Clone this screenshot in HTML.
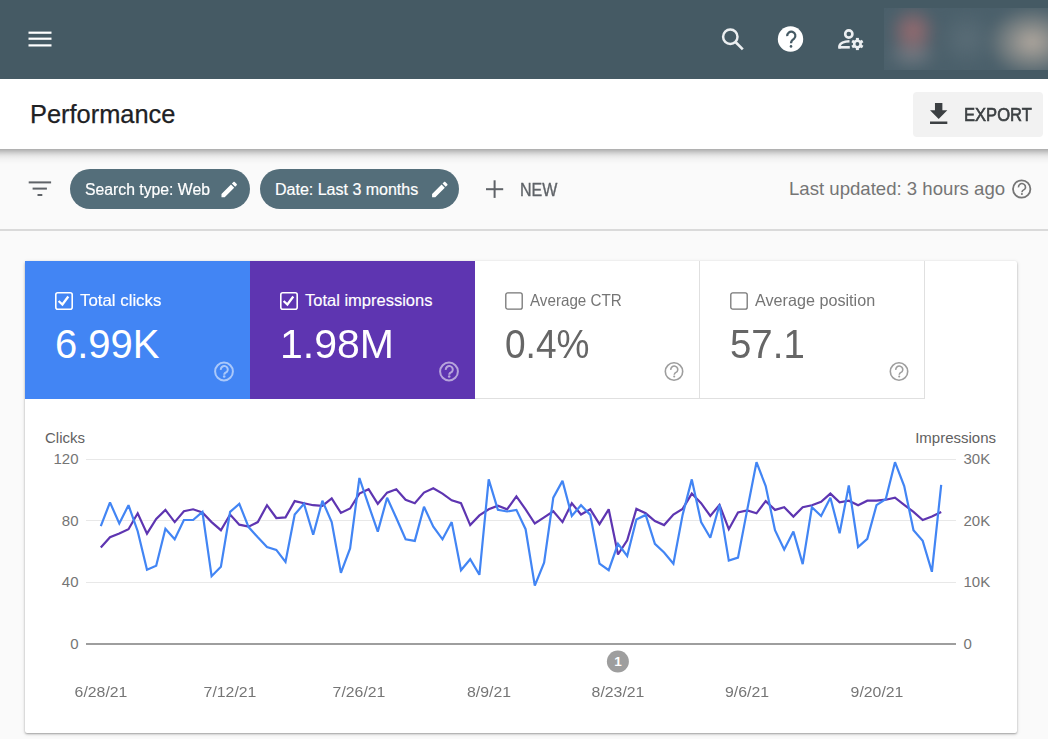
<!DOCTYPE html>
<html><head><meta charset="utf-8">
<style>
*{margin:0;padding:0;box-sizing:border-box}
html,body{width:1048px;height:739px;overflow:hidden;background:#fafafa;font-family:"Liberation Sans",sans-serif;position:relative}
.abs{position:absolute}
#hdr{left:0;top:0;width:1048px;height:79px;background:#455a64}
#titlebar{left:0;top:79px;width:1048px;height:70px;background:#fff;z-index:2}
#tshadow{left:0;top:149px;width:1048px;height:16px;z-index:2;background:linear-gradient(to bottom, rgba(0,0,0,.31) 0, rgba(0,0,0,.24) 2px, rgba(0,0,0,.16) 4px, rgba(0,0,0,.075) 7px, rgba(0,0,0,.03) 10px, rgba(0,0,0,.01) 13px, rgba(0,0,0,0) 16px)}
#title{left:30px;top:100px;font-size:25.4px;color:#202124;z-index:3;-webkit-text-stroke:0.25px #202124;white-space:nowrap}
#export{left:913px;top:92px;width:130px;height:45px;background:#f2f2f2;border-radius:4px;z-index:3}
#exporttxt{z-index:4;left:964px;top:105px;font-size:18px;color:#3c4043;-webkit-text-stroke:0.6px #3c4043;transform-origin:0 0;transform:scaleX(0.92)}
#filterbar{left:0;top:149px;width:1048px;height:82px;background:#fafafa;border-bottom:2px solid #dadada}
.chip{height:40px;top:169px;background:#546e7a;border-radius:20px}
.chiptxt{top:180.7px;font-size:16px;transform-origin:0 0;transform:scaleX(0.985);color:#fff;white-space:nowrap;-webkit-text-stroke:0.2px #fff}
#newtxt{left:520px;top:180px;font-size:18px;color:#5f6368;-webkit-text-stroke:0.35px #5f6368;transform-origin:0 0;transform:scaleX(0.89)}
#updated{left:789px;top:178px;font-size:18.6px;color:#757575;white-space:nowrap}
#card{left:25px;top:261px;width:992px;height:472px;background:#fff;border-radius:2px;box-shadow:0 1px 2px rgba(0,0,0,.3),0 1px 4px rgba(0,0,0,.12)}
.tile{top:261px;width:225px;height:138px}
.tlabel{top:290.5px;font-size:16.5px;white-space:nowrap;-webkit-text-stroke:0.15px currentColor}
.tval{top:322px;font-size:40px;white-space:nowrap}
.axl{font-size:15px;color:#616161;white-space:nowrap}
</style></head><body>
<div id="hdr" class="abs"></div>
<!-- hamburger -->
<svg class="abs" style="left:0;top:0" width="1048" height="79">
  <rect x="28.5" y="31.6" width="23" height="2.2" fill="#fff"/>
  <rect x="28.5" y="37.6" width="23" height="2.2" fill="#fff"/>
  <rect x="28.5" y="44.3" width="23" height="2.2" fill="#fff"/>
  <!-- search -->
  <circle cx="730.3" cy="36.8" r="7.2" fill="none" stroke="#eceff1" stroke-width="2.5"/>
  <line x1="735.5" y1="42" x2="742.8" y2="49.3" stroke="#eceff1" stroke-width="2.6"/>
  <!-- help -->
  <circle cx="790.5" cy="39" r="12.7" fill="#fff"/>
  <path d="M787.2 36.2 A4.1 4.1 0 1 1 794.2 38.6 Q791 40.6 791 43.3" fill="none" stroke="#455a64" stroke-width="2.2"/><circle cx="791" cy="46.4" r="1.3" fill="#455a64"/>
  <!-- person gear -->
  <circle cx="848.8" cy="34" r="3.6" fill="none" stroke="#eceff1" stroke-width="2.6"/>
  <path d="M839.6 48.5 L839.6 45.5 Q841 41.6 849.5 41.2" fill="none" stroke="#eceff1" stroke-width="2.6"/>
  <line x1="838.4" y1="47.3" x2="849.8" y2="47.3" stroke="#eceff1" stroke-width="2.6"/>
  <g transform="translate(857.4 44)">
    <circle r="4.5" fill="#eceff1"/>
    <g fill="#eceff1">
      <rect x="-1.5" y="-6.1" width="3" height="12.2"/>
      <rect x="-1.5" y="-6.1" width="3" height="12.2" transform="rotate(60)"/>
      <rect x="-1.5" y="-6.1" width="3" height="12.2" transform="rotate(120)"/>
    </g>
    <circle r="1.9" fill="#455a64"/>
  </g>
</svg>
<!-- blurred avatars -->
<div class="abs" style="left:884px;top:8px;width:164px;height:62px;overflow:hidden;background:#4b606b">
  <div class="abs" style="left:-20px;top:-20px;width:210px;height:110px;filter:blur(6px);
    background:
      radial-gradient(ellipse 25px 26px at 49px 43px, rgba(160,108,112,0.95), rgba(160,108,112,0) 100%),
      radial-gradient(ellipse 28px 18px at 48px 66px, rgba(120,126,134,0.85), rgba(120,126,134,0) 100%),
      radial-gradient(ellipse 30px 30px at 103px 51px, rgba(92,110,120,0.9), rgba(92,110,120,0) 100%),
      radial-gradient(ellipse 46px 36px at 168px 54px, rgba(180,170,160,1), rgba(180,170,160,0) 100%);"></div>
</div>
<div id="titlebar" class="abs"></div><div id="tshadow" class="abs"></div>
<div id="title" class="abs">Performance</div>
<div id="export" class="abs"></div>
<svg class="abs" style="left:900px;top:90px;z-index:4" width="60" height="40">
  <path fill="#3c4043" transform="translate(23.85 9.2) scale(1.235)" d="M19 9h-4V3H9v6H5l7 7 7-7zM5 18v2h14v-2H5z"/>
</svg>
<div id="exporttxt" class="abs">EXPORT</div>

<div id="filterbar" class="abs"></div>
<svg class="abs" style="left:0;top:149px" width="80" height="80">
  <rect x="28.7" y="32.4" width="22.4" height="2" fill="#5f6368"/>
  <rect x="32.6" y="38.6" width="14.3" height="2" fill="#5f6368"/>
  <rect x="37.5" y="45" width="4.8" height="2" fill="#5f6368"/>
</svg>
<div class="abs chip" style="left:70px;width:180px"></div>
<div class="abs chiptxt" style="left:85px">Search type: Web</div>
<div class="abs chip" style="left:260px;width:199px"></div>
<div class="abs chiptxt" style="left:275px;transform:scaleX(1.0)">Date: Last 3 months</div>
<svg class="abs" style="left:0;top:170px" width="470" height="40">
  <path id="pencil" fill="#fff" transform="translate(218.9 9.2) scale(0.86)" d="M3 17.25V21h3.75L17.81 9.94l-3.75-3.75L3 17.25zM20.71 7.04c.39-.39.39-1.02 0-1.41l-2.34-2.34c-.39-.39-1.02-.39-1.41 0l-1.83 1.83 3.75 3.75 1.83-1.83z"/>
  <use href="#pencil" x="210.6"/>
</svg>
<svg class="abs" style="left:0;top:0" width="520" height="220">
  <rect x="486" y="188.2" width="17.2" height="2" fill="#5f6368"/>
  <rect x="493.6" y="180.3" width="2" height="17.6" fill="#5f6368"/>
</svg>
<div id="newtxt" class="abs">NEW</div>
<div id="updated" class="abs">Last updated: 3 hours ago</div>
<svg class="abs" style="left:1010px;top:178px" width="24" height="24">
  <circle cx="11.7" cy="11" r="8.7" fill="none" stroke="#757575" stroke-width="1.8"/>
  <path d="M8.5 9.4 A3.5 3.5 0 1 1 14.8 11.1 Q11.9 12.5 11.9 14.3" fill="none" stroke="#757575" stroke-width="1.6"/><circle cx="11.9" cy="16" r="1.05" fill="#757575"/>
</svg>

<div id="card" class="abs"></div>
<div class="abs tile" style="left:25px;background:#4285f4"></div>
<div class="abs tile" style="left:250px;background:#5e35b1"></div>
<div class="abs tile" style="left:475px;border-right:1px solid #e0e0e0;border-bottom:1px solid #e0e0e0"></div>
<div class="abs tile" style="left:700px;border-right:1px solid #e0e0e0;border-bottom:1px solid #e0e0e0"></div>

<svg class="abs" style="left:54px;top:291px" width="20" height="20"><rect x="1.8" y="1.8" width="16.4" height="16.4" rx="2" fill="none" stroke="#fff" stroke-width="1.6"/><path d="M4.6 10 L8.4 13.5 L14.3 5.5" fill="none" stroke="#fff" stroke-width="2.3"/></svg>
<div class="abs tlabel" style="left:80px;color:#fff;transform-origin:0 0;transform:scaleX(1.02)">Total clicks</div>
<div class="abs tval" style="left:55px;color:#fff;transform-origin:0 0;transform:scaleX(1.0)">6.99K</div>
<svg class="abs" style="left:214px;top:361px;opacity:0.55" width="22" height="22"><circle cx="10" cy="10.5" r="8.9" fill="none" stroke="#fff" stroke-width="2.0"/><path d="M6.8 8.9 A3.5 3.5 0 1 1 13.1 10.6 Q10.2 12 10.2 13.8" fill="none" stroke="#fff" stroke-width="2.0"/><circle cx="10.2" cy="15.5" r="1.30" fill="#fff"/></svg>
<svg class="abs" style="left:279px;top:291px" width="20" height="20"><rect x="1.8" y="1.8" width="16.4" height="16.4" rx="2" fill="none" stroke="#fff" stroke-width="1.6"/><path d="M4.6 10 L8.4 13.5 L14.3 5.5" fill="none" stroke="#fff" stroke-width="2.3"/></svg>
<div class="abs tlabel" style="left:305px;color:#fff;transform-origin:0 0;transform:scaleX(1.0)">Total impressions</div>
<div class="abs tval" style="left:280px;color:#fff;transform-origin:0 0;transform:scaleX(1.025)">1.98M</div>
<svg class="abs" style="left:439px;top:361px;opacity:0.55" width="22" height="22"><circle cx="10" cy="10.5" r="8.9" fill="none" stroke="#fff" stroke-width="2.0"/><path d="M6.8 8.9 A3.5 3.5 0 1 1 13.1 10.6 Q10.2 12 10.2 13.8" fill="none" stroke="#fff" stroke-width="2.0"/><circle cx="10.2" cy="15.5" r="1.30" fill="#fff"/></svg>
<svg class="abs" style="left:504px;top:291px" width="20" height="20"><rect x="1.8" y="1.8" width="16.4" height="16.4" rx="2" fill="none" stroke="#757575" stroke-width="1.3"/></svg>
<div class="abs tlabel" style="left:530px;color:#757575;-webkit-text-stroke:0;transform-origin:0 0;transform:scaleX(0.92)">Average CTR</div>
<div class="abs tval" style="left:505px;color:#666666;transform-origin:0 0;transform:scaleX(0.926)">0.4%</div>
<svg class="abs" style="left:664px;top:361px;opacity:1" width="22" height="22"><circle cx="10" cy="10.5" r="8.7" fill="none" stroke="#9e9e9e" stroke-width="1.6"/><path d="M6.8 8.9 A3.5 3.5 0 1 1 13.1 10.6 Q10.2 12 10.2 13.8" fill="none" stroke="#9e9e9e" stroke-width="1.6"/><circle cx="10.2" cy="15.5" r="1.04" fill="#9e9e9e"/></svg>
<svg class="abs" style="left:729px;top:291px" width="20" height="20"><rect x="1.8" y="1.8" width="16.4" height="16.4" rx="2" fill="none" stroke="#757575" stroke-width="1.3"/></svg>
<div class="abs tlabel" style="left:755px;color:#757575;-webkit-text-stroke:0;transform-origin:0 0;transform:scaleX(0.98)">Average position</div>
<div class="abs tval" style="left:730px;color:#666666;transform-origin:0 0;transform:scaleX(0.96)">57.1</div>
<svg class="abs" style="left:889px;top:361px;opacity:1" width="22" height="22"><circle cx="10" cy="10.5" r="8.7" fill="none" stroke="#9e9e9e" stroke-width="1.6"/><path d="M6.8 8.9 A3.5 3.5 0 1 1 13.1 10.6 Q10.2 12 10.2 13.8" fill="none" stroke="#9e9e9e" stroke-width="1.6"/><circle cx="10.2" cy="15.5" r="1.04" fill="#9e9e9e"/></svg>

<svg class="abs" style="left:0;top:0" width="1048" height="739">
  <g stroke="#e8e8e8" stroke-width="1">
    <line x1="86" y1="459.5" x2="956" y2="459.5"/>
    <line x1="86" y1="520.5" x2="956" y2="520.5"/>
    <line x1="86" y1="582.5" x2="956" y2="582.5"/>
  </g>
  <line x1="86" y1="644" x2="956" y2="644" stroke="#9e9e9e" stroke-width="2"/>
  <polyline fill="none" stroke="#5e35b1" stroke-width="2.2" stroke-linejoin="miter" stroke-miterlimit="2.5" points="100.8,547.4 110.0,537.3 119.3,533.6 128.5,529.2 137.7,513.3 147.0,533.6 156.2,519.0 165.4,509.9 174.7,522.1 183.9,511.3 193.1,509.3 202.4,512.5 211.6,522.1 220.9,530.2 230.1,514.5 239.3,524.7 248.6,526.7 257.8,522.1 267.0,505.2 276.3,518.0 285.5,517.4 294.7,501.1 304.0,503.2 313.2,505.2 322.4,505.8 331.7,498.3 340.9,512.9 350.1,508.5 359.4,493.6 368.6,489.2 377.8,503.8 387.1,492.6 396.3,489.2 405.6,499.7 414.8,503.2 424.0,492.6 433.3,488.2 442.5,493.6 451.7,500.3 461.0,503.2 470.2,525.1 479.4,515.4 488.7,509.3 497.9,505.8 507.1,509.3 516.4,496.3 525.6,509.3 534.8,523.5 544.1,517.4 553.3,511.3 562.5,522.1 571.8,503.2 581.0,514.5 590.3,509.3 599.5,524.1 608.7,509.3 618.0,554.5 627.2,540.3 636.4,508.9 645.7,513.3 654.9,521.0 664.1,525.1 673.4,514.5 682.6,508.9 691.8,493.6 701.1,503.2 710.3,516.0 719.5,504.8 728.8,529.2 738.0,512.5 747.2,510.5 756.5,513.3 765.7,501.1 775.0,509.9 784.2,507.2 793.4,516.6 802.7,507.2 811.9,505.2 821.1,501.8 830.4,493.6 839.6,502.4 848.8,500.7 858.1,505.2 867.3,500.7 876.5,500.7 885.8,499.7 895.0,497.7 904.2,504.8 913.5,511.9 922.7,520.0 931.9,516.6 941.2,511.9"/>
  <polyline fill="none" stroke="#4285f4" stroke-width="2.2" stroke-linejoin="miter" stroke-miterlimit="2.5" points="100.8,526.1 110.0,502.4 119.3,523.5 128.5,505.2 137.7,531.2 147.0,569.7 156.2,565.7 165.4,528.7 174.7,539.3 183.9,520.0 193.1,520.0 202.4,511.9 211.6,576.2 220.9,566.7 230.1,511.9 239.3,503.8 248.6,527.1 257.8,537.3 267.0,547.0 276.3,549.9 285.5,562.0 294.7,514.5 304.0,503.8 313.2,534.8 322.4,500.7 331.7,522.1 340.9,572.8 350.1,548.4 359.4,478.0 368.6,505.2 377.8,531.6 387.1,497.7 396.3,518.0 405.6,539.3 414.8,540.9 424.0,506.8 433.3,526.7 442.5,539.3 451.7,522.1 461.0,570.2 470.2,559.2 479.4,574.8 488.7,479.4 497.9,509.9 507.1,511.5 516.4,509.9 525.6,529.2 534.8,585.6 544.1,562.6 553.3,497.7 562.5,480.9 571.8,516.0 581.0,505.2 590.3,514.9 599.5,563.7 608.7,570.2 618.0,543.8 627.2,555.9 636.4,519.4 645.7,514.9 654.9,543.8 664.1,552.5 673.4,563.7 682.6,514.9 691.8,479.4 701.1,522.1 710.3,537.7 719.5,504.8 728.8,560.6 738.0,557.6 747.2,509.9 756.5,462.2 765.7,486.1 775.0,530.2 784.2,549.5 793.4,531.6 802.7,564.1 811.9,507.2 821.1,516.0 830.4,497.7 839.6,533.2 848.8,485.5 858.1,547.0 867.3,538.9 876.5,505.2 885.8,499.1 895.0,462.2 904.2,486.1 913.5,530.2 922.7,540.9 931.9,571.8 941.2,484.9"/>
  <circle cx="617.9" cy="661.5" r="11" fill="#9e9e9e"/>
  <text x="618" y="665.8" text-anchor="middle" font-family="Liberation Sans" font-size="13.5" font-weight="bold" fill="#fff">1</text>
</svg>
<div class="abs axl" style="left:45px;top:429px">Clicks</div>
<div class="abs axl" style="left:900px;width:96px;text-align:right;top:429px">Impressions</div>
<div class="abs axl" style="left:30px;width:48.5px;text-align:right;top:450px;color:#757575">120</div>
<div class="abs axl" style="left:30px;width:48.5px;text-align:right;top:511.70000000000005px;color:#757575">80</div>
<div class="abs axl" style="left:30px;width:48.5px;text-align:right;top:573.3px;color:#757575">40</div>
<div class="abs axl" style="left:30px;width:48.5px;text-align:right;top:635px;color:#757575">0</div>
<div class="abs axl" style="left:963.5px;top:450px;color:#757575">30K</div>
<div class="abs axl" style="left:963.5px;top:511.70000000000005px;color:#757575">20K</div>
<div class="abs axl" style="left:963.5px;top:573.3px;color:#757575">10K</div>
<div class="abs axl" style="left:963.5px;top:635px;color:#757575">0</div>
<div class="abs axl" style="left:50.8px;width:100px;text-align:center;top:683px;color:#757575;transform:scaleX(1.055)">6/28/21</div>
<div class="abs axl" style="left:180.08999999999997px;width:100px;text-align:center;top:683px;color:#757575;transform:scaleX(1.055)">7/12/21</div>
<div class="abs axl" style="left:309.38px;width:100px;text-align:center;top:683px;color:#757575;transform:scaleX(1.055)">7/26/21</div>
<div class="abs axl" style="left:438.67px;width:100px;text-align:center;top:683px;color:#757575;transform:scaleX(1.055)">8/9/21</div>
<div class="abs axl" style="left:567.9599999999999px;width:100px;text-align:center;top:683px;color:#757575;transform:scaleX(1.055)">8/23/21</div>
<div class="abs axl" style="left:697.2499999999999px;width:100px;text-align:center;top:683px;color:#757575;transform:scaleX(1.055)">9/6/21</div>
<div class="abs axl" style="left:826.54px;width:100px;text-align:center;top:683px;color:#757575;transform:scaleX(1.055)">9/20/21</div>

</body></html>
